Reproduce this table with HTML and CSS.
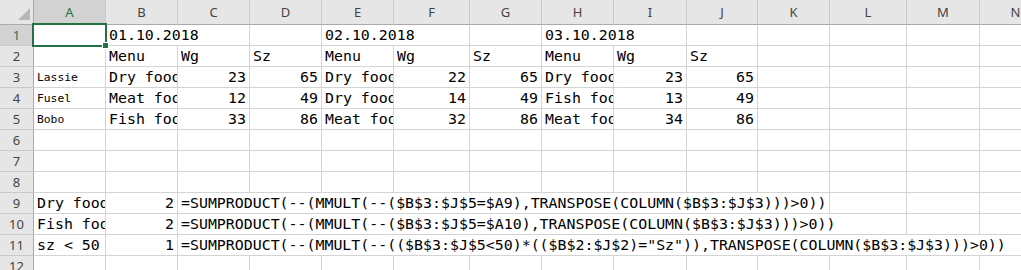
FILE: index.html
```html
<!DOCTYPE html>
<html lang="en">
<head>
<meta charset="UTF-8">
<title>Futterplan</title>
<link rel="stylesheet" href="styles.css">
</head>
<body>
<div class="sheet"></div>

<script>
  const COLUMNS = ['A', 'B', 'C', 'D', 'E', 'F', 'G', 'H', 'I', 'J', 'K', 'L', 'M', 'N'];
  const ROW_COUNT = 12;

  // cell values; [text, span] where the text runs over empty neighbours
  const SHEET = {
    1: { B: ['01.10.2018', 2], E: ['02.10.2018', 2], H: ['03.10.2018', 2] },
    2: { B: 'Menu', C: 'Wg', D: 'Sz', E: 'Menu', F: 'Wg', G: 'Sz', H: 'Menu', I: 'Wg', J: 'Sz' },
    3: { A: 'Lassie', B: 'Dry food', C: 23, D: 65, E: 'Dry food', F: 22, G: 65, H: 'Dry food', I: 23, J: 65 },
    4: { A: 'Fusel', B: 'Meat food', C: 12, D: 49, E: 'Dry food', F: 14, G: 49, H: 'Fish food', I: 13, J: 49 },
    5: { A: 'Bobo', B: 'Fish food', C: 33, D: 86, E: 'Meat food', F: 32, G: 86, H: 'Meat food', I: 34, J: 86 },
    9: { A: 'Dry food', B: 2, C: ['=SUMPRODUCT(--(MMULT(--($B$3:$J$5=$A9),TRANSPOSE(COLUMN($B$3:$J$3)))>0))', 9] },
    10: { A: 'Fish food', B: 2, C: ['=SUMPRODUCT(--(MMULT(--($B$3:$J$5=$A10),TRANSPOSE(COLUMN($B$3:$J$3)))>0))', 10] },
    11: { A: 'sz < 50', B: 1, C: ['=SUMPRODUCT(--(MMULT(--(($B$3:$J$5<50)*(($B$2:$J$2)="Sz")),TRANSPOSE(COLUMN($B$3:$J$3)))>0))', 12] }
  };
  const SMALL_ROWS = [3, 4, 5];

  function addDiv(parent, className, text) {
    const el = document.createElement('div');
    el.className = className;
    if (text !== undefined) el.textContent = text;
    parent.appendChild(el);
    return el;
  }

  function buildSheet() {
    const sheet = document.querySelector('.sheet');

    const corner = addDiv(sheet, 'corner');
    addDiv(corner, 'select-all');
    COLUMNS.forEach(col => {
      addDiv(sheet, col === 'A' ? 'col-head active' : 'col-head', col);
    });

    for (let r = 1; r <= ROW_COUNT; r++) {
      addDiv(sheet, r === 1 ? 'row-head active' : 'row-head', r);
      const row = SHEET[r] || {};
      let i = 0;
      while (i < COLUMNS.length) {
        const col = COLUMNS[i];
        let value = row[col];
        let span = 1;
        if (Array.isArray(value)) {
          span = value[1];
          value = value[0];
        }
        const cell = addDiv(sheet, 'cell', value === undefined ? '' : value);
        if (typeof value === 'number') cell.classList.add('num');
        if (col === 'A' && SMALL_ROWS.includes(r)) cell.classList.add('small');
        if (col === 'A' && r === 1) cell.classList.add('current');
        if (span > 1) cell.style.gridColumn = `span ${span}`;
        i += span;
      }
    }
  }

  buildSheet();
</script>
</body>
</html>
```

FILE: styles.css
```css
body {
  margin: 0;
  background: #fff;
  overflow: hidden;
}
.sheet {
  display: grid;
  grid-template-columns: 34px 72px 72px 72px 72px 72px 76px 72px 72px 73px 71px 72px 77px 73px 72px;
  grid-template-rows: 25px;
  grid-auto-rows: 21px;
}
.corner, .col-head, .row-head {
  box-sizing: border-box;
  background-color: #e6e6e6;
  color: #444;
  font-family: "Noto Sans", "Open Sans", sans-serif;
  font-size: 13px;
  text-align: center;
}
.corner {
  display: flex;
  justify-content: flex-end;
  align-items: flex-end;
  padding: 0 3px 4px 0;
  border-right: 1px solid #ababab;
  border-bottom: 1px solid #ababab;
}
.select-all {
  width: 12px;
  height: 12px;
  background-color: #b7b7b7;
  clip-path: polygon(100% 0, 100% 100%, 0 100%);
}
.col-head {
  line-height: 24px;
  border-right: 1px solid #cacaca;
  border-bottom: 1px solid #ababab;
}
.row-head {
  line-height: 20px;
  border-right: 1px solid #ababab;
  border-bottom: 1px solid #cacaca;
}
.col-head.active, .row-head.active {
  background-color: #d2d2d2;
  color: #217346;
}
.cell {
  position: relative;
  box-sizing: border-box;
  padding: 0 3px;
  border-right: 1px solid #d4d4d4;
  border-bottom: 1px solid #d4d4d4;
  font-family: "DejaVu Sans Mono", monospace;
  font-size: 14.9px;
  line-height: 20px;
  color: #000;
  white-space: nowrap;
  overflow: hidden;
}
.num {
  text-align: right;
}
.small {
  padding-top: 1px;
  font-size: 11.3px;
}
/* the active cell keeps its frame above the gridlines */
.current {
  overflow: visible;
  z-index: 1;
}
.current::before {
  content: "";
  position: absolute;
  left: -2px;
  top: -2px;
  right: -2px;
  bottom: -2px;
  border: 2px solid #217346;
}
.current::after {
  content: "";
  position: absolute;
  right: -4px;
  bottom: -4px;
  width: 5px;
  height: 5px;
  background-color: #217346;
  border: 1px solid #fff;
}
```
